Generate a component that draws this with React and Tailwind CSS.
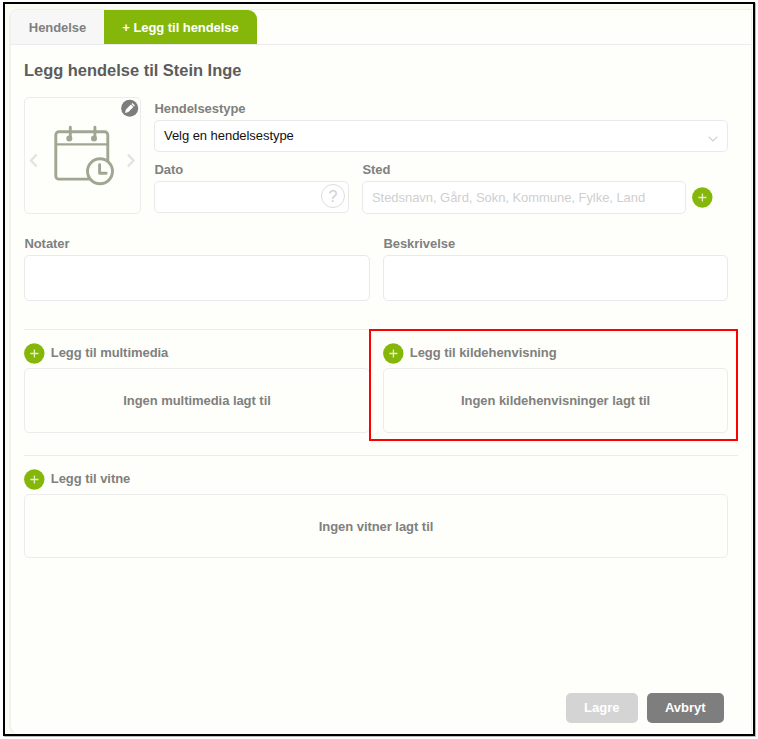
function PlusButton() {
  return (
    <button className="block h-[21px] w-[21px] flex-none">
      <svg viewBox="0 0 21 21" className="h-[21px] w-[21px]">
        <circle cx="10.3" cy="10.5" r="10.2" fill="#84b70a" />
        <path d="M6.3 10.5h8.2M10.4 6.4v8.2" stroke="#e4f0c4" strokeWidth="1.3" fill="none" />
      </svg>
    </button>
  );
}

function Label({ children }) {
  return (
    <div className="h-[15px] whitespace-nowrap pt-px pl-[0.4px] text-[13px] leading-[15px] font-bold tracking-[-0.05px] text-[#808080]">
      {children}
    </div>
  );
}

function Section({ title, empty, className, boxClass }) {
  return (
    <div className={className}>
      <div className="flex h-[21px] items-center gap-[5.4px]">
        <PlusButton />
        <div className="-mt-[5px]">
          <Label>{title}</Label>
        </div>
      </div>
      <div
        className={`mt-1 flex items-center justify-center rounded-[5px] border border-[#ececec] text-[13px] font-bold tracking-[-0.05px] text-[#808080] ${boxClass}`}
      >
        {empty}
      </div>
    </div>
  );
}

function EventPicture() {
  return (
    <div className="h-[117px] w-[117px] flex-none rounded-[5px] border border-[#ececec]">
      <svg viewBox="25 98 115 115" className="h-[115px] w-[115px]" fill="none">
        <path d="M36.6 154.5l-5.6 6 5.6 6M127.9 154.5l5.6 6-5.6 6" stroke="#e2e2e0" strokeWidth="2.3" />
        <g stroke="#9fa691" strokeWidth="2.9">
          <rect x="55.8" y="131.8" width="52" height="47.3" rx="3" />
          <path d="M55.8 144.4h52" strokeWidth="2.4" />
          <path d="M70.3 127.2v10M94.9 127.2v10" strokeLinecap="round" />
          <circle cx="100" cy="171.3" r="12.5" fill="#fefffa" />
          <path d="M99.6 164.8v8.4h6.6" strokeLinecap="round" strokeLinejoin="round" />
        </g>
        <circle cx="69.3" cy="138.5" r="3" fill="#9fa691" />
        <circle cx="94" cy="138.5" r="3" fill="#9fa691" />
        <circle cx="129.7" cy="108.3" r="8.5" fill="#7d7d7d" />
        <path d="M125 113l.9-3.4 5-5 2.5 2.5-5 5zM131.5 104l.9-.9 2.5 2.5-.9.9z" fill="#fff" />
      </svg>
    </div>
  );
}

export default function App() {
  return (
    <div className="h-[739px] w-[758px] overflow-hidden bg-white pt-[2px] pl-[3px] font-['Liberation_Sans',Arial,sans-serif]">
      <div className="h-[734px] w-[752px] overflow-hidden border-2 border-black bg-[#fafbf3] pt-[5px] pl-1 shadow-[1px_1px_0_#bbb]">
        <div className="relative h-[725px] w-[743px] rounded-tl-[9px] rounded-bl-[9px] border-t border-r border-l-2 border-[#f0f0ef] bg-[#fefffa]">
          <div className="flex h-[35px] border-b border-[#ececec]">
            <button className="h-[34px] w-[93px] rounded-tl-[8px] bg-[#f7f7f7] pt-[2px] text-[13px] font-bold tracking-[-0.05px] text-[#808080]">
              Hendelse
            </button>
            <button className="h-[34px] w-[153px] rounded-tr-[9px] bg-[#84b70a] pt-[2px] text-[13px] font-bold tracking-[-0.05px] text-white">
              + Legg til hendelse
            </button>
          </div>

          <div className="pl-[13px]">
            <h1 className="h-[52px] pt-[15px] text-[16.45px] leading-[20px] font-bold text-[#5c5c5c]">
              Legg hendelse til Stein Inge
            </h1>

            <div className="flex w-[704px] gap-[13px]">
              <EventPicture />
              <div className="flex-1 pt-[3px]">
                <Label>Hendelsestype</Label>
                <div className="mt-[5px] flex h-8 items-center justify-between rounded-[5px] border border-[#e9e9e9] bg-white pr-[9px] pl-[9px] text-[13px] tracking-[-0.05px] text-[#111]">
                  Velg en hendelsestype
                  <svg viewBox="0 0 10 6" className="mt-[6px] h-[6px] w-[10px]" fill="none">
                    <path d="M.6.6L5 5 9.4.6" stroke="#cfcfcf" strokeWidth="1.1" />
                  </svg>
                </div>
                <div className="mt-[9px] flex">
                  <div className="w-[195px]">
                    <Label>Dato</Label>
                    <div className="mt-[5px] flex h-8 items-center justify-end rounded-[5px] border border-[#e9e9e9] bg-white pr-[3px]">
                      <span className="-mt-[2px] flex h-6 w-6 items-center justify-center rounded-full border border-[#dcdcdc] pt-[2px] text-[16px] text-[#d0d0d0]">
                        ?
                      </span>
                    </div>
                  </div>
                  <div className="ml-[13px] w-[324px]">
                    <Label>Sted</Label>
                    <div className="mt-[5px] flex h-[33px] items-center rounded-[5px] border border-[#e9e9e9] bg-white pl-[9px] text-[13px] tracking-[-0.05px] text-[#cfcfcf]">
                      Stedsnavn, Gård, Sokn, Kommune, Fylke, Land
                    </div>
                  </div>
                  <div className="mt-[26px] ml-[6px]">
                    <PlusButton />
                  </div>
                </div>
              </div>
            </div>

            <div className="mt-[21px] flex w-[704px] gap-[13px]">
              <div className="w-[346px]">
                <Label>Notater</Label>
                <div className="mt-[5px] h-[46px] rounded-[5px] border border-[#e9e9e9] bg-white" />
              </div>
              <div className="w-[345px]">
                <Label>Beskrivelse</Label>
                <div className="mt-[5px] h-[46px] rounded-[5px] border border-[#e9e9e9] bg-white" />
              </div>
            </div>

            <div className="mt-7 flex w-[714px] border-t border-[#ececec] pt-[13px]">
              <Section
                title="Legg til multimedia"
                empty="Ingen multimedia lagt til"
                className="w-[346px]"
                boxClass="h-[65px]"
              />
              <Section
                title="Legg til kildehenvisning"
                empty="Ingen kildehenvisninger lagt til"
                className="ml-[13px] w-[345px]"
                boxClass="h-[65px]"
              />
            </div>

            <div className="mt-[22px] w-[714px] border-t border-[#ececec] pt-[13px]">
              <Section
                title="Legg til vitne"
                empty="Ingen vitner lagt til"
                className="w-[704px]"
                boxClass="h-16 pt-px"
              />
            </div>

            <div className="mt-[135px] flex w-[700px] justify-end gap-[9px]">
              <button className="h-[30px] w-[71.5px] rounded-[5px] bg-[#d4d4d4] text-[13px] font-bold text-white">Lagre</button>
              <button className="h-[30px] w-[77.5px] rounded-[5px] bg-[#7e7e7e] text-[13px] font-bold text-white">Avbryt</button>
            </div>
          </div>

          {/* highlight around the source citation section */}
          <div className="absolute top-[319px] left-[358px] h-[112px] w-[369px] border-2 border-[#f00]" />
        </div>
      </div>
    </div>
  );
}
